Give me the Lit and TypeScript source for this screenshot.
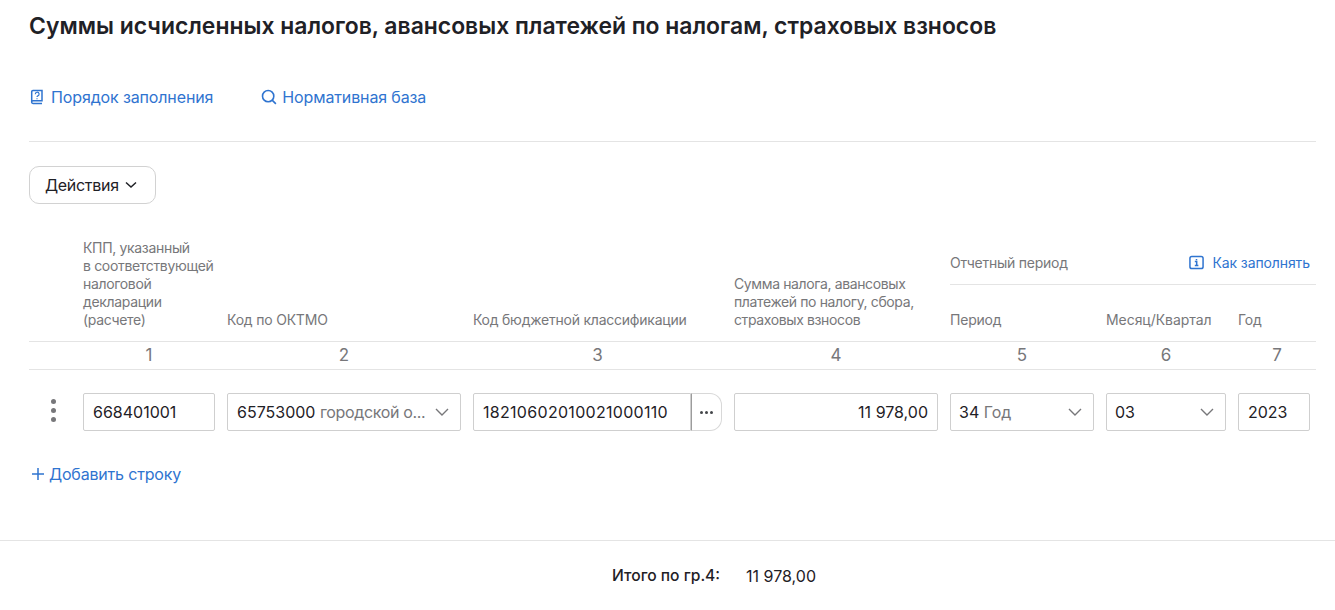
import { LitElement, html, css } from "lit";
import { customElement } from "lit/decorators.js";

const chev = html`<svg class="chev" width="14" height="8" viewBox="0 0 14 8" fill="none" stroke="#77777a" stroke-width="1.4"><path d="M1 1l6 6 6-6"/></svg>`;

@customElement("app-root")
export class AppRoot extends LitElement {
  static styles = css`
    :host { display: block; width: 1335px; height: 610px; overflow: hidden; background: #fff; color: #1f2126;
      font-family: Inter, "Noto Sans", sans-serif; font-size: 16px; box-sizing: border-box; }
    * { box-sizing: border-box; }
    .main { padding: 0 19px 0 29px; }
    h1 { margin: 0; padding-top: 13px; font-size: 22.92px; line-height: 27px; font-weight: 600; height: 41px; white-space: nowrap; }
    .links { display: flex; gap: 47px; padding-top: 45px; height: 101px; border-bottom: 1px solid #e4e4e4; }
    .link { display: flex; align-items: center; gap: 6px; height: 22px; color: #2f74d0; font-size: 16px; letter-spacing: -0.13px; }
    .link svg { flex: none; }
    .search { margin-left: 1px; gap: 5px; }
    .actions-wrap { padding-top: 24px; height: 92px; }
    .actions { display: inline-flex; align-items: center; gap: 6px; height: 38px; width: 127px; padding-left: 15px; border: 1px solid #d2d2d2; border-radius: 10px; font-size: 16px; letter-spacing: -0.3px; }
    .grid { display: grid; grid-template-columns: 42px 132px 234px 249px 204px 144px 120px 72px; grid-template-rows: 51px 56px auto auto; column-gap: 12px; padding-right: 6px; }
    .hd { font-size: 14px; line-height: 18px; color: #77777a; align-self: end; padding-bottom: 12px; letter-spacing: -0.2px; white-space: nowrap; }
    .hd1 { grid-column: 2; grid-row: 1 / 3; letter-spacing: -0.33px; }
    .hd2 { grid-column: 3; grid-row: 1 / 3; }
    .hd3 { grid-column: 4; grid-row: 1 / 3; letter-spacing: -0.23px; }
    .hd4 { grid-column: 5; grid-row: 1 / 3; letter-spacing: -0.38px; }
    .p5 { grid-column: 6; grid-row: 2; }
    .p6 { grid-column: 7; grid-row: 2; letter-spacing: -0.05px; }
    .p7 { grid-column: 8; grid-row: 2; }
    .period { grid-column: 6 / 9; grid-row: 1; margin-right: -6px; border-bottom: 1px solid #e4e4e4; display: flex; align-items: center; justify-content: space-between; font-size: 14px; color: #77777a; padding: 7px 6px 0 0; letter-spacing: -0.25px; }
    .how { display: flex; align-items: center; gap: 8px; color: #2f74d0; letter-spacing: -0.1px; }
    .nums { grid-column: 1 / -1; margin-right: -6px; display: grid; grid-template-columns: subgrid; border-top: 1px solid #e4e4e4; border-bottom: 1px solid #e4e4e4; height: 29px; }
    .nums span { text-align: center; font-size: 17px; line-height: 26px; color: #77777a; }
    .row { grid-column: 1 / -1; display: grid; grid-template-columns: subgrid; padding-top: 23px; }
    .dots { display: flex; flex-direction: column; align-items: center; justify-content: center; gap: 4px; padding: 0 0 4px 6px; width: 42px; }
    .dots i { width: 5px; height: 5px; background: #77777a; border-radius: 50%; display: block; }
    .field { height: 38px; border: 1px solid #cfcfcf; border-radius: 2px; padding: 0 9px; display: flex; align-items: center; font-size: 16px; white-space: nowrap; overflow: hidden; }
    .sel { justify-content: space-between; padding-right: 11px; }
    .sel .v b { font-weight: 400; color: #77777a; }
    .ok .v b { letter-spacing: -0.35px; }
    .tight { padding-left: 8px; }
    .right { justify-content: flex-end; }
    .kbk { display: flex; height: 38px; }
    .kbk .field { flex: 1; border-radius: 2px 0 0 2px; letter-spacing: 0.3px; }
    .more { width: 31px; flex: none; border: 1px solid #d8d8d8; border-left: 1px solid #9c9c9c; border-radius: 0 12px 12px 0; display: flex; align-items: center; justify-content: center; gap: 2px; }
    .more i { width: 3px; height: 3px; border-radius: 50%; background: #44464a; }
    .add { display: flex; align-items: center; gap: 4px; color: #2f74d0; font-size: 16px; height: 22px; margin-top: 32px; padding-left: 2px; letter-spacing: -0.18px; }
    .foot { margin-top: 55px; border-top: 1px solid #e4e4e4; display: flex; gap: 26px; padding: 25px 0 0 612px; font-size: 16px; line-height: 20px; }
    .foot b { font-weight: 500; font-size: 15.6px; }
  `;

  render() {
    return html`
      <div class="main">
        <h1>Суммы исчисленных налогов, авансовых платежей по налогам, страховых взносов</h1>
        <div class="links">
          <div class="link">
            <svg width="16" height="16" viewBox="0 0 16 16" fill="none" stroke="#2f74d0"><path d="M2.7 13V2.8A1.3 1.3 0 0 1 4 1.5h9v10.2H4a1.3 1.3 0 0 0 0 2.8h9" stroke-width="1.5"/><path d="M6.3 5.2a1.9 1.9 0 1 1 2.6 1.7c-.6.3-.9.6-.9 1.2M8 9.2v1" stroke-width="1.2"/></svg>
            Порядок заполнения
          </div>
          <div class="link search">
            <svg width="16" height="16" viewBox="0 0 17 17" fill="none" stroke="#2f74d0" stroke-width="1.7"><circle cx="7.6" cy="7.6" r="6"/><path d="M11.8 11.8l4 4"/></svg>
            Нормативная база
          </div>
        </div>
        <div class="actions-wrap">
          <div class="actions">Действия
            <svg width="12" height="8" viewBox="0 0 12 8" fill="none" stroke="#1f2126" stroke-width="1.5"><path d="M1 1.5l5 4.5 5-4.5"/></svg>
          </div>
        </div>
        <div class="grid">
          <div class="hd hd1">КПП, указанный<br />в соответствующей<br />налоговой<br />декларации<br />(расчете)</div>
          <div class="hd hd2">Код по ОКТМО</div>
          <div class="hd hd3">Код бюджетной классификации</div>
          <div class="hd hd4">Сумма налога, авансовых<br />платежей по налогу, сбора,<br />страховых взносов</div>
          <div class="period">
            <span>Отчетный период</span>
            <span class="how">
              <svg width="15" height="15" viewBox="0 0 16 16" fill="none" stroke="#2f74d0"><rect x="1" y="1.5" width="14" height="13" rx="2" stroke-width="1.6"/><path d="M6.2 7h2v4M6.2 11.2h3.8M8 4.2v1.4" stroke-width="1.6"/></svg>
              Как заполнять
            </span>
          </div>
          <div class="hd p5">Период</div>
          <div class="hd p6">Месяц/Квартал</div>
          <div class="hd p7">Год</div>
          <div class="nums">
            <span></span><span>1</span><span>2</span><span>3</span><span>4</span><span>5</span><span>6</span><span>7</span>
          </div>
          <div class="row">
            <div class="dots"><i></i><i></i><i></i></div>
            <div class="field">668401001</div>
            <div class="field sel ok"><span class="v">65753000 <b>городской о...</b></span>${chev}</div>
            <div class="kbk"><div class="field">18210602010021000110</div><div class="more"><i></i><i></i><i></i></div></div>
            <div class="field right">11 978,00</div>
            <div class="field sel tight"><span class="v">34 <b>Год</b></span>${chev}</div>
            <div class="field sel tight"><span class="v">03</span>${chev}</div>
            <div class="field">2023</div>
          </div>
        </div>
        <div class="add">
          <svg width="14" height="14" viewBox="0 0 14 14" fill="none" stroke="#2f74d0" stroke-width="1.5"><path d="M7 1v12M1 7h12"/></svg>
          Добавить строку
        </div>
      </div>
      <div class="foot"><b>Итого по гр.4:</b><span>11 978,00</span></div>
    `;
  }
}
